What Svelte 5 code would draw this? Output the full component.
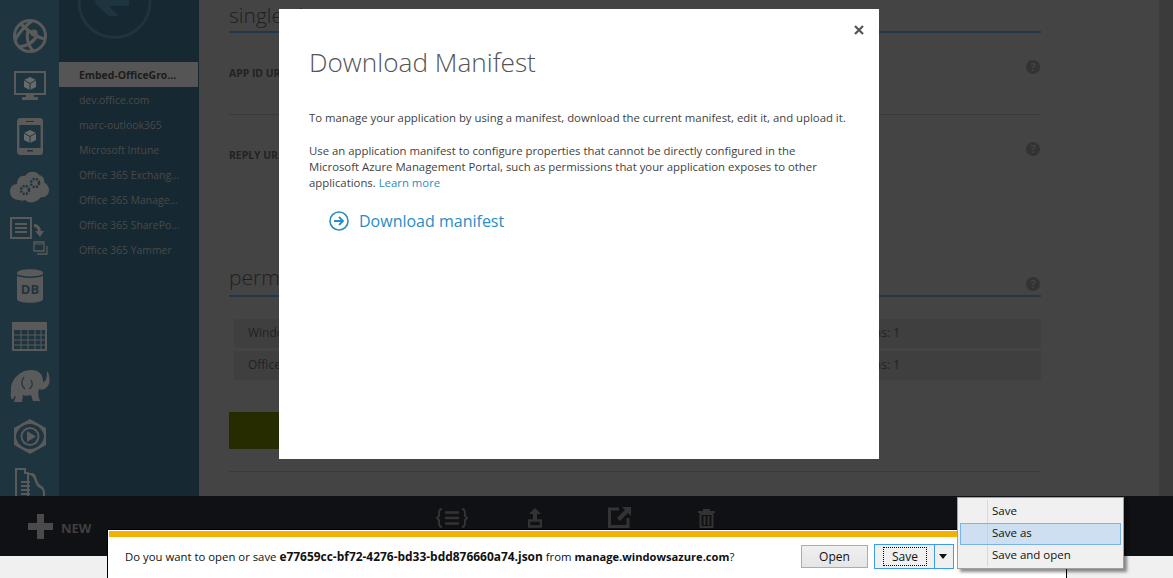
<script>
  const apps = [
    "Embed-OfficeGro...",
    "dev.office.com",
    "marc-outlook365",
    "Microsoft Intune",
    "Office 365 Exchang...",
    "Office 365 Manage...",
    "Office 365 SharePo...",
    "Office 365 Yammer"
  ];
  const perms = ["Windows Azure Active Directory", "Office 365 Unified API"];
</script>

<div class="page">
  <div class="top">
    <nav class="rail">
      <div class="ico">
        <svg width="36" height="36" viewBox="0 0 36 36">
          <circle cx="18" cy="18" r="15.5" fill="none" stroke="#5a5a5a" stroke-width="3" />
          <path d="M3 22C8 13 13 8 20 3M9 6C15 12 23 19 33 21M16 12C14 20 16 27 21 33M25 17C23 23 16 28 7 29" fill="none" stroke="#5a5a5a" stroke-width="3.2" />
          <circle cx="22" cy="15" r="3.6" fill="#5a5a5a" />
        </svg>
      </div>
      <div class="ico">
        <svg width="32" height="30" viewBox="0 0 32 30">
          <path d="M1 1h30v22H1z" fill="none" stroke="#5a5a5a" stroke-width="2" />
          <path d="M12 24h8v2h4v3H8v-3h4z" fill="#5a5a5a" />
          <path d="M16 6l6 3v7l-6 3-6-3V9z" fill="#6a6a6a" />
          <path d="M16 12.5V19M10 9l6 3.5L22 9" fill="none" stroke="#1e3540" stroke-width="1" />
        </svg>
      </div>
      <div class="ico">
        <svg width="26" height="37" viewBox="0 0 26 37">
          <rect x="1.2" y="1.2" width="23.6" height="34.6" rx="2" fill="none" stroke="#5a5a5a" stroke-width="2.4" />
          <path d="M1 1h24v6H1zM1 30h24v6H1z" fill="#5a5a5a" />
          <path d="M9 3h8v1H9zM10 32h6v1.5h-6z" fill="#1e3540" />
          <path d="M13 12l6 3v7l-6 3-6-3v-7z" fill="#6a6a6a" />
          <path d="M13 18.5V25M7 15l6 3.5 6-3.5" fill="none" stroke="#1e3540" stroke-width="1" />
        </svg>
      </div>
      <div class="ico">
        <svg width="39" height="33" viewBox="0 0 39 33">
          <path d="M9 30C3 30 0 26 0 21.500 0 17 3 14 7 14 7 8 11 5 15 6 18 1 26 0 29 5 33 6 35 9 34 12 37 14 39 17 39 20 39 25 35 28 31 27 27 33 19 34 15 30 13 31 11 31 9 30Z" fill="#5a5a5a" />
          <circle cx="15" cy="20" r="4" fill="none" stroke="#1e3540" stroke-width="2.600" stroke-dasharray="2 1.200" />
          <circle cx="25" cy="13" r="4" fill="none" stroke="#1e3540" stroke-width="2.600" stroke-dasharray="2 1.200" />
        </svg>
      </div>
      <div class="ico">
        <svg width="39" height="38" viewBox="0 0 39 38">
          <rect x="1" y="1" width="20" height="20" fill="none" stroke="#5a5a5a" stroke-width="2" />
          <path d="M5 6h12v2H5zM5 10h12v2H5zM5 14h12v2H5z" fill="#5a5a5a" />
          <path d="M24 7c4 0 6 2 7 7h3l-4 6-5-6h3c-1-3-2-4-4-4z" fill="#5a5a5a" />
          <path d="M24 25h10v9H24zM37 29v8H27" fill="none" stroke="#5a5a5a" stroke-width="1.300" />
          <path d="M24 27h10" stroke="#5a5a5a" stroke-width="1" />
        </svg>
      </div>
      <div class="ico">
        <svg width="26" height="34" viewBox="0 0 26 34">
          <path d="M0 4C0-1 26-1 26 4V30C26 35 0 35 0 30Z" fill="#5a5a5a" />
          <path d="M0 6C5 9 21 9 26 6" fill="none" stroke="#1e3540" stroke-width="1.500" />
          <text x="13" y="25" class="db">DB</text>
        </svg>
      </div>
      <div class="ico">
        <svg width="35" height="29" viewBox="0 0 35 29">
          <path fill-rule="evenodd" fill="#5a5a5a" d="M0 1a1 1 0 0 1 1-1h33a1 1 0 0 1 1 1v27a1 1 0 0 1-1 1H1a1 1 0 0 1-1-1ZM2 8v19h31V8Z" />
          <path d="M2 13h31M2 18h31M2 23h31M9 8v19M16 8v19M23 8v19M29 8v19" stroke="#5a5a5a" stroke-width="1" />
        </svg>
      </div>
      <div class="ico">
        <svg width="40" height="34" viewBox="0 0 40 34">
          <path d="M1 22C0 14 6 5 15 2 21 0 27 1 30 4 32 6 33 9 33 13 36 13 37 9 37 2 40 6 41 14 37 18 34 21 31 21 29 20 28 24 28 27 30 32H23L21 26C18 27 15 27 13 26L12 33H4L6 27C3 27 4 32 2 30 0 28 1 25 1 22Z" fill="#5a5a5a" />
          <path d="M14 8C11 12 11 17 15 20M19 20C23 18 23 14 21 11" fill="none" stroke="#1e3540" stroke-width="1.200" />
        </svg>
      </div>
      <div class="ico">
        <svg width="32" height="35" viewBox="0 0 32 35">
          <path d="M16 0L32 9V26L16 35 0 26V9Z" fill="#5a5a5a" />
          <path d="M16 5C24 5 30 12 30 17.500 30 23 24 30 16 30 8 30 2 23 2 17.500 2 12 8 5 16 5Z" fill="#1e3540" />
          <circle cx="16" cy="17.500" r="9.500" fill="#5a5a5a" />
          <circle cx="16" cy="17.500" r="7.500" fill="#1e3540" />
          <path d="M13 12l9 5.500-9 5.500z" fill="#5a5a5a" />
        </svg>
      </div>
      <div class="ico">
        <svg width="32" height="38" viewBox="0 0 32 38">
          <path d="M1 1h11v4h3v30H1zM3 3v30h10V7h-3V3z M15 6h3c2 0 3 1 4 4 1 3 2 6 4 8 3 1 5 4 5 8v9H15v-2h14v-7c0-3-2-5-5-6-2-2-3-5-4-8-1-2-2-4-5-4z" fill="#5a5a5a" />
          <path d="M7 14h9v2H7zM7 18h9v2H7zM7 22h9v2H7zM7 26h9v2H7z" fill="#5a5a5a" />
        </svg>
      </div>
    </nav>

    <aside class="sidebar">
      <div class="back">
        <svg width="80" height="62" viewBox="0 0 80 62">
          <circle cx="39.500" cy="2" r="35.500" fill="none" stroke="#1e3540" stroke-width="3" />
          <path d="M54 -2H34L44 -12H34L19 2 34 16H44L34 6H54Z" fill="#1e3540" />
        </svg>
      </div>
      <ul>
        {#each apps as app, i}
          <li class:active={i === 0}>{app}</li>
        {/each}
      </ul>
    </aside>

    <main class="main">
      <section class="col">
        <h2 class="first">single sign-on</h2>
        <div class="field one">
          <label>APP ID URI</label>
          <span class="help">?</span>
        </div>
        <div class="field two">
          <label>REPLY URL</label>
          <span class="help">?</span>
        </div>
        <div class="perm-head">
          <h2>permissions to other applications</h2>
          <span class="help">?</span>
        </div>
        <div class="rows">
          {#each perms as p}
            <div class="row"><span>{p}</span><span>Delegated Permissions: 1</span></div>
          {/each}
        </div>
        <div class="add"></div>
        <div class="rule"></div>
      </section>
      <div class="scroll"></div>
    </main>
  </div>

  <footer class="bar">
    <div class="new">
      <svg width="25" height="25" viewBox="0 0 25 25"><path d="M9 0h7v9h9v7h-9v9H9v-9H0V9h9z" fill="#4a4a4a" /></svg>
      <span>NEW</span>
    </div>
    <div class="tools">
      <svg width="32" height="20" viewBox="0 0 32 20">
        <path d="M6 1C3 1 3 3 3 5V8L1 10 3 12V15C3 17 3 19 6 19M26 1C29 1 29 3 29 5V8L31 10 29 12V15C29 17 29 19 26 19" fill="none" stroke="#333" stroke-width="2" />
        <path d="M9 4.500h14M9 10h14M9 15.500h14" stroke="#333" stroke-width="2.500" />
      </svg>
      <svg width="14" height="20" viewBox="0 0 14 20">
        <path d="M7 0L13 6H9V12H5V6H1Z" fill="#333" />
        <path d="M1 12.500h12v6H1z" fill="none" stroke="#333" stroke-width="2.400" />
      </svg>
      <svg width="23" height="21" viewBox="0 0 23 21">
        <path d="M11 2H1.500V19.500H20V11" fill="none" stroke="#333" stroke-width="3" />
        <path d="M14 0H23V9L20 6 12 14 9 11 17 3Z" fill="#333" />
      </svg>
      <svg width="17" height="19" viewBox="0 0 17 19">
        <path d="M0 2h5V0h7v2h5v2H0z" fill="#333" />
        <path d="M2.500 5H14.500V18H2.500ZM6.500 7V16M10.500 7V16" fill="none" stroke="#333" stroke-width="2" />
      </svg>
    </div>
  </footer>
  <div class="strip"></div>

  <div class="modal">
    <button class="close" aria-label="close">
      <svg width="10" height="10" viewBox="0 0 10 10"><path d="M1 1l8 8M9 1l-8 8" stroke="#555" stroke-width="2.200" /></svg>
    </button>
    <h1>Download Manifest</h1>
    <p class="intro">To manage your application by using a manifest, download the current manifest, edit it, and upload it.</p>
    <p>Use an application manifest to configure properties that cannot be directly configured in the<br />Microsoft Azure Management Portal, such as permissions that your application exposes to other<br />applications. <a href="#top">Learn more</a></p>
    <div class="dl">
      <svg width="20" height="20" viewBox="0 0 20 20">
        <circle cx="10" cy="10" r="9" fill="none" stroke="#2a8dc5" stroke-width="1.600" />
        <path d="M5 10h9M10 6l4 4-4 4" fill="none" stroke="#2a8dc5" stroke-width="1.800" />
      </svg>
      <a href="#top">Download manifest</a>
    </div>
  </div>

  <div class="notice">
    <div class="orange"></div>
    <div class="notice-body">
      <span class="msg">Do you want to open or save <b class="file">e77659cc-bf72-4276-bd33-bdd876660a74.json</b> from <b class="host">manage.windowsazure.com</b>?</span>
      <button class="btn">Open</button>
      <div class="split">
        <div class="split-main"><span>Save</span></div>
        <div class="split-arrow"></div>
      </div>
    </div>
  </div>

  <div class="menu">
    <div class="mi first-item">Save</div>
    <div class="mi sel">Save as</div>
    <div class="mi last-item">Save and open</div>
  </div>
</div>

<style>
  :global(body) {
    margin: 0;
    background: #f0f0f0;
  }

  .page {
    position: relative;
    width: 1173px;
    height: 578px;
    overflow: hidden;
    font-family: "Open Sans", sans-serif;
  }

  .top {
    display: flex;
    height: 496px;
    overflow: hidden;
  }

  .rail {
    width: 59px;
    flex: none;
    padding-top: 11px;
    background: #1e3540;
    box-sizing: border-box;
  }

  .ico {
    height: 50px;
    display: flex;
    align-items: center;
    justify-content: center;
  }

  .db {
    font: bold 13px "Open Sans", sans-serif;
    fill: #1e3540;
    text-anchor: middle;
  }

  .sidebar {
    width: 140px;
    flex: none;
    background: #162831;
  }

  .back {
    height: 62px;
    padding-left: 16px;
    overflow: hidden;
  }

  .sidebar ul {
    list-style: none;
    margin: 0;
    padding: 0;
  }

  .sidebar li {
    height: 25px;
    line-height: 27px;
    padding-left: 20px;
    font-size: 10.4px;
    color: #4a4a4a;
    white-space: nowrap;
  }

  .sidebar li.active {
    width: 119px;
    background: #555;
    color: #1c1c1c;
    font-weight: 700;
  }

  .main {
    flex: 1;
    display: flex;
    background: #444;
    color: #1f1f1f;
  }

  .col {
    flex: none;
    width: 812px;
    margin-left: 30px;
    margin-right: 118px;
  }

  h2 {
    margin: 0;
    font-size: 21px;
    font-weight: 300;
    line-height: 26px;
    color: #1f1f1f;
    white-space: nowrap;
  }

  .first {
    height: 29px;
    padding-top: 2px;
    border-bottom: 2px solid #23364a;
  }

  .field {
    display: flex;
    justify-content: space-between;
    padding-top: 32px;
    box-sizing: border-box;
  }

  .field.one {
    height: 82px;
    border-bottom: 1px solid #3a3a3a;
  }

  .field.two {
    height: 151px;
  }

  label {
    font-size: 10.4px;
    font-weight: 700;
    color: #222;
    line-height: 16px;
  }

  .help {
    flex: none;
    width: 14px;
    height: 14px;
    margin: -5px 1px 0 0;
    border-radius: 50%;
    background: #333;
    color: #444;
    font-size: 11px;
    font-weight: 700;
    line-height: 14px;
    text-align: center;
  }

  .perm-head {
    display: flex;
    justify-content: space-between;
    align-items: flex-end;
    height: 31px;
    padding-bottom: 5px;
    border-bottom: 2px solid #23364a;
    box-sizing: border-box;
  }

  .perm-head .help {
    margin: 0 1px -1px 0;
  }

  .rows {
    margin: 22px 0 0 5px;
    display: flex;
    flex-direction: column;
    gap: 3px;
  }

  .row {
    height: 29px;
    box-sizing: border-box;
    display: flex;
    justify-content: space-between;
    align-items: center;
    padding: 0 141px 2px 14px;
    background: #3f3f3f;
    font-size: 12px;
    color: #222;
  }

  .add {
    width: 200px;
    height: 37px;
    margin-top: 32px;
    background: #262c00;
  }

  .rule {
    height: 1px;
    margin-top: 22px;
    background: #3a3a3a;
  }

  .scroll {
    width: 14px;
    flex: none;
    background: #3b3b3b;
  }

  .bar {
    height: 60px;
    position: relative;
    display: flex;
    background: #101114;
  }

  .strip {
    height: 22px;
    background: #f0f0f0;
  }

  .new {
    display: flex;
    align-items: center;
    gap: 8px;
    height: 25px;
    margin: 18px 0 0 28px;
  }

  .new span {
    font-size: 13px;
    font-weight: 700;
    color: #3f3f3f;
    padding-top: 2px;
  }

  .tools {
    position: absolute;
    left: 436px;
    top: 11px;
    display: flex;
    align-items: flex-end;
  }

  .tools svg:nth-child(2) {
    margin-left: 60px;
  }

  .tools svg:nth-child(3) {
    margin-left: 66px;
  }

  .tools svg:nth-child(4) {
    margin-left: 67px;
  }

  .modal {
    position: absolute;
    left: 279px;
    top: 9px;
    width: 600px;
    height: 450px;
    padding: 31px 30px 0;
    box-sizing: border-box;
    background: #fff;
    font-size: 11.35px;
    line-height: 16px;
    color: #3f3f3f;
  }

  .close {
    position: absolute;
    right: 15px;
    top: 16px;
    padding: 0;
    border: 0;
    background: none;
    line-height: 0;
  }

  h1 {
    margin: 0 0 26px;
    font-size: 26.2px;
    font-weight: 300;
    line-height: 44px;
    color: #555;
  }

  .modal p {
    margin: 0;
    white-space: nowrap;
  }

  .intro {
    padding-bottom: 17px;
  }

  .modal a {
    color: #2a8dc5;
    text-decoration: none;
  }

  .dl {
    display: flex;
    align-items: center;
    gap: 10px;
    margin: 18px 0 0 20px;
    font-size: 16px;
    line-height: 24px;
  }

  .notice {
    position: absolute;
    left: 107px;
    top: 529px;
    width: 960px;
    height: 60px;
    box-sizing: border-box;
    border: 1px solid #000;
    padding: 1px;
    background: #fff;
  }

  .orange {
    height: 6px;
    background: #f4b200;
  }

  .notice-body {
    position: relative;
    display: flex;
    align-items: center;
    height: 38px;
    padding-left: 16px;
    font-size: 11.35px;
    color: #111;
  }

  .msg {
    width: 676px;
    white-space: nowrap;
  }

  .file {
    font-size: 11.95px;
  }

  .host {
    font-size: 11.15px;
  }

  .btn {
    width: 67px;
    height: 23px;
    padding: 0;
    border: 1px solid #acacac;
    background: linear-gradient(#f0f0f0, #e5e5e5);
    font: 12px "Open Sans", sans-serif;
    color: #111;
  }

  .split {
    display: flex;
    height: 25px;
    margin-left: 6px;
    border: 1px solid #3a9bf0;
    box-sizing: border-box;
    background: #f0f0f0;
    font-size: 12px;
  }

  .split-main {
    width: 60px;
    border-right: 1px solid #3a9bf0;
    display: flex;
    align-items: center;
    padding-left: 8px;
    box-sizing: border-box;
  }

  .split-main span {
    width: 44px;
    height: 19px;
    line-height: 18px;
    border: 1px dotted #000;
    box-sizing: border-box;
    text-align: center;
  }

  .split-arrow {
    width: 18px;
    position: relative;
  }

  .split-arrow::after {
    content: "";
    position: absolute;
    left: 4px;
    top: 9px;
    border: 4px solid transparent;
    border-top: 5px solid #111;
    border-bottom: 0;
  }

  .menu {
    position: absolute;
    left: 957px;
    top: 497px;
    width: 167px;
    height: 72px;
    padding: 2px;
    box-sizing: border-box;
    border: 1px solid #a0a0a0;
    background: #f0f0f0;
    box-shadow: 3px 3px 3px rgba(0, 0, 0, 0.45);
    font-size: 11.5px;
    color: #111;
  }

  .menu::before {
    content: "";
    position: absolute;
    left: 29px;
    top: 2px;
    bottom: 2px;
    width: 1px;
    background: #d8d8d8;
  }

  .mi {
    position: relative;
    height: 22px;
    line-height: 22px;
    padding-left: 32px;
    box-sizing: border-box;
  }

  .first-item {
    margin-top: 1px;
    line-height: 20px;
  }

  .last-item {
    line-height: 20px;
  }

  .mi.sel {
    border: 1px solid #7ab2ee;
    padding-left: 31px;
    line-height: 17px;
    background: rgba(170, 205, 240, 0.5);
  }
</style>
